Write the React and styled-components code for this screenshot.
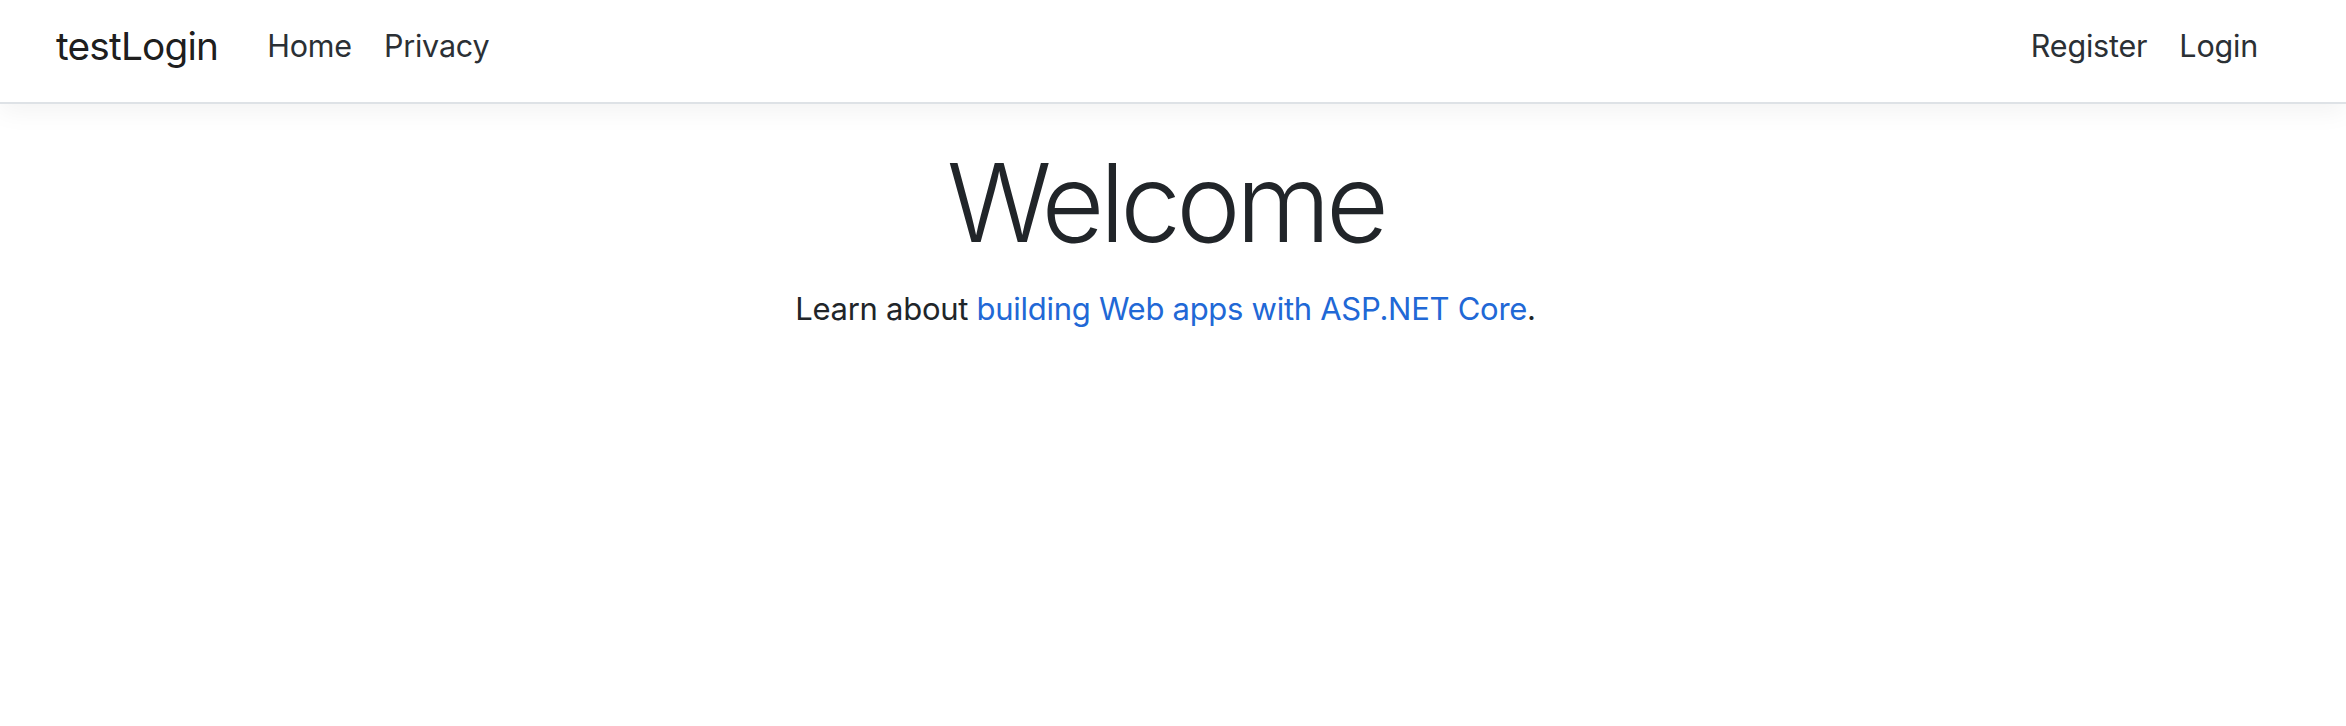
import React from "react";
import styled, { createGlobalStyle } from "styled-components";

const GlobalStyle = createGlobalStyle`
  html, body {
    margin: 0;
    padding: 0;
    background: #ffffff;
  }
  body {
    font-family: Inter, "Noto Sans", "Liberation Sans", sans-serif;
    color: #212529;
    -webkit-font-smoothing: antialiased;
  }
  * { box-sizing: border-box; }
`;

const Page = styled.div`
  min-height: 726px;
  background: #ffffff;
`;

const Navbar = styled.header`
  display: flex;
  align-items: center;
  height: 104px;
  padding: 0 72px 10px 56px;
  background: #ffffff;
  border-bottom: 2px solid #dee2e6;
  box-shadow: 0 8px 24px rgba(0, 0, 0, 0.05);
`;

const Brand = styled.a`
  font-size: 38.8px;
  line-height: 60px;
  color: rgba(0, 0, 0, 0.9);
  text-decoration: none;
  margin-right: 33px;
  letter-spacing: -0.8px;
`;

const NavList = styled.nav`
  display: flex;
  align-items: center;
  margin-left: ${(p) => (p.$right ? "auto" : "0")};
`;

const NavLink = styled.a`
  font-size: 30.5px;
  line-height: 48px;
  padding: 0 16px;
  color: #2b3035;
  text-decoration: none;
  letter-spacing: -0.2px;
`;

const Main = styled.main`
  display: flex;
  flex-direction: column;
  align-items: center;
  padding: 34px 15px 0 0;
  text-align: center;
`;

const Title = styled.h1`
  margin: 0 0 18px;
  font-size: 108.6px;
  font-weight: 300;
  line-height: 1.2;
  color: #212529;
  letter-spacing: -4.7px;
`;

const Lead = styled.p`
  margin: 0;
  font-size: 31px;
  line-height: 1.5;
  color: #212529;
  letter-spacing: -0.28px;
`;

const Link = styled.a`
  color: #2168d6;
  text-decoration: none;
`;

export default function App() {
  return (
    <Page>
      <GlobalStyle />
      <Navbar>
        <Brand href="#">testLogin</Brand>
        <NavList>
          <NavLink href="#">Home</NavLink>
          <NavLink href="#">Privacy</NavLink>
        </NavList>
        <NavList $right>
          <NavLink href="#">Register</NavLink>
          <NavLink href="#">Login</NavLink>
        </NavList>
      </Navbar>
      <Main>
        <Title>Welcome</Title>
        <Lead>
          Learn about <Link href="#">building Web apps with ASP.NET Core</Link>.
        </Lead>
      </Main>
    </Page>
  );
}
